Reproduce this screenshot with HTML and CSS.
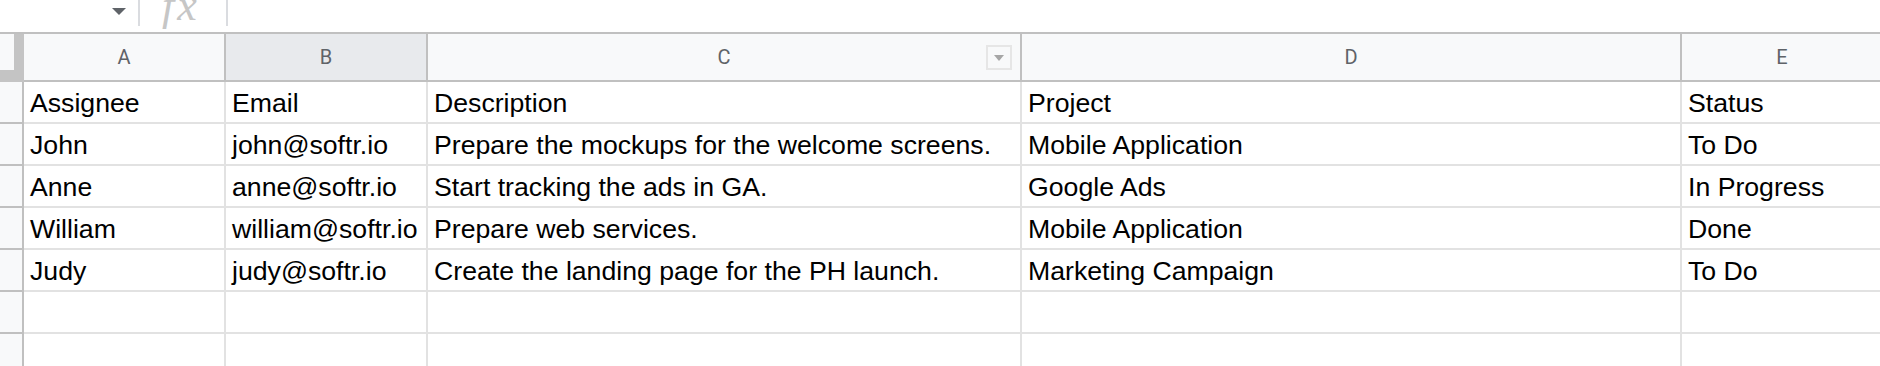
FILE: index.html
```html
<!DOCTYPE html>
<html lang="en">
<head>
    <meta charset="UTF-8">
    <meta name="viewport" content="width=device-width, initial-scale=1.0">
    <title>Tasks - Sheet</title>
    <link rel="stylesheet" href="styles.css">
</head>
<body>
    <div class="toolbar">
        <div class="name-box"><span class="caret"></span></div>
        <div class="sep"></div>
        <div class="fx">fx</div>
        <div class="sep"></div>
        <div class="formula"></div>
    </div>

    <div class="sheet">
        <div class="corner"></div>
        <div class="col-head">A</div>
        <div class="col-head selected">B</div>
        <div class="col-head">C<span class="filter-btn"><span class="filter-arrow"></span></span></div>
        <div class="col-head">D</div>
        <div class="col-head">E</div>

        <div class="row-head"></div>
        <div class="cell">Assignee</div>
        <div class="cell">Email</div>
        <div class="cell">Description</div>
        <div class="cell">Project</div>
        <div class="cell">Status</div>

        <div class="row-head"></div>
        <div class="cell">John</div>
        <div class="cell">john@softr.io</div>
        <div class="cell">Prepare the mockups for the welcome screens.</div>
        <div class="cell">Mobile Application</div>
        <div class="cell">To Do</div>

        <div class="row-head"></div>
        <div class="cell">Anne</div>
        <div class="cell">anne@softr.io</div>
        <div class="cell">Start tracking the ads in GA.</div>
        <div class="cell">Google Ads</div>
        <div class="cell">In Progress</div>

        <div class="row-head"></div>
        <div class="cell">William</div>
        <div class="cell">william@softr.io</div>
        <div class="cell">Prepare web services.</div>
        <div class="cell">Mobile Application</div>
        <div class="cell">Done</div>

        <div class="row-head"></div>
        <div class="cell">Judy</div>
        <div class="cell">judy@softr.io</div>
        <div class="cell">Create the landing page for the PH launch.</div>
        <div class="cell">Marketing Campaign</div>
        <div class="cell">To Do</div>

        <div class="row-head"></div>
        <div class="cell"></div>
        <div class="cell"></div>
        <div class="cell"></div>
        <div class="cell"></div>
        <div class="cell"></div>

        <div class="row-head"></div>
        <div class="cell"></div>
        <div class="cell"></div>
        <div class="cell"></div>
        <div class="cell"></div>
        <div class="cell"></div>
    </div>
</body>
</html>
```

FILE: styles.css
```css
*, *::before, *::after {
    box-sizing: border-box;
}
html, body {
    height: 366px;
    overflow: hidden;
}
body {
    margin: 0;
    background: #fff;
    font-family: "Liberation Sans", Arial, sans-serif;
}

/* formula bar */
.toolbar {
    display: flex;
    height: 34px;
    border-bottom: 2px solid #c0c0c0;
    overflow: hidden;
}
.name-box {
    width: 138px;
    display: flex;
    justify-content: flex-end;
    padding-right: 12px;
}
.caret {
    width: 0;
    height: 0;
    margin-top: 8px;
    border-left: 7.5px solid transparent;
    border-right: 7.5px solid transparent;
    border-top: 7px solid #5f6368;
}
.sep {
    width: 2px;
    height: 26px;
    background: #dadce0;
}
.fx {
    width: 86px;
    padding-left: 22px;
    margin-top: -16px;
    font-family: "Liberation Serif", serif;
    font-style: italic;
    font-size: 44px;
    line-height: 1;
    letter-spacing: 3px;
    color: #c6c6c6;
}
.formula {
    flex: 1;
}

/* grid */
.sheet {
    display: grid;
    grid-template-columns: 24px 202px 202px 594px 660px 202px;
    grid-template-rows: 48px repeat(7, 42px);
    width: 1884px;
}
.corner {
    background: #f8f9fa;
    border-right: 10px solid #c4c4c4;
    border-bottom: 12px solid #c4c4c4;
}
.col-head {
    position: relative;
    display: flex;
    align-items: center;
    justify-content: center;
    background: #f8f9fa;
    border-right: 2px solid #c0c0c0;
    border-bottom: 2px solid #c0c0c0;
    font-family: Roboto, "Liberation Sans", sans-serif;
    font-size: 20px;
    color: #5f6368;
}
.col-head.selected {
    background: #e8eaed;
}
.filter-btn {
    position: absolute;
    right: 8px;
    top: 11px;
    width: 26px;
    height: 25px;
    border: 2px solid #e6e6e6;
    background: #f8f9fa;
    display: flex;
    align-items: center;
    justify-content: center;
}
.filter-arrow {
    width: 0;
    height: 0;
    border-left: 5px solid transparent;
    border-right: 5px solid transparent;
    border-top: 6px solid #a6a6a6;
}
.row-head {
    background: #f8f9fa;
    border-right: 2px solid #c0c0c0;
    border-bottom: 2px solid #c0c0c0;
}
.cell {
    display: flex;
    align-items: flex-end;
    padding: 0 4px 3px 6px;
    border-right: 2px solid #e2e2e2;
    border-bottom: 2px solid #e2e2e2;
    font-size: 26.67px;
    color: #000;
    white-space: nowrap;
    overflow: hidden;
}
```
